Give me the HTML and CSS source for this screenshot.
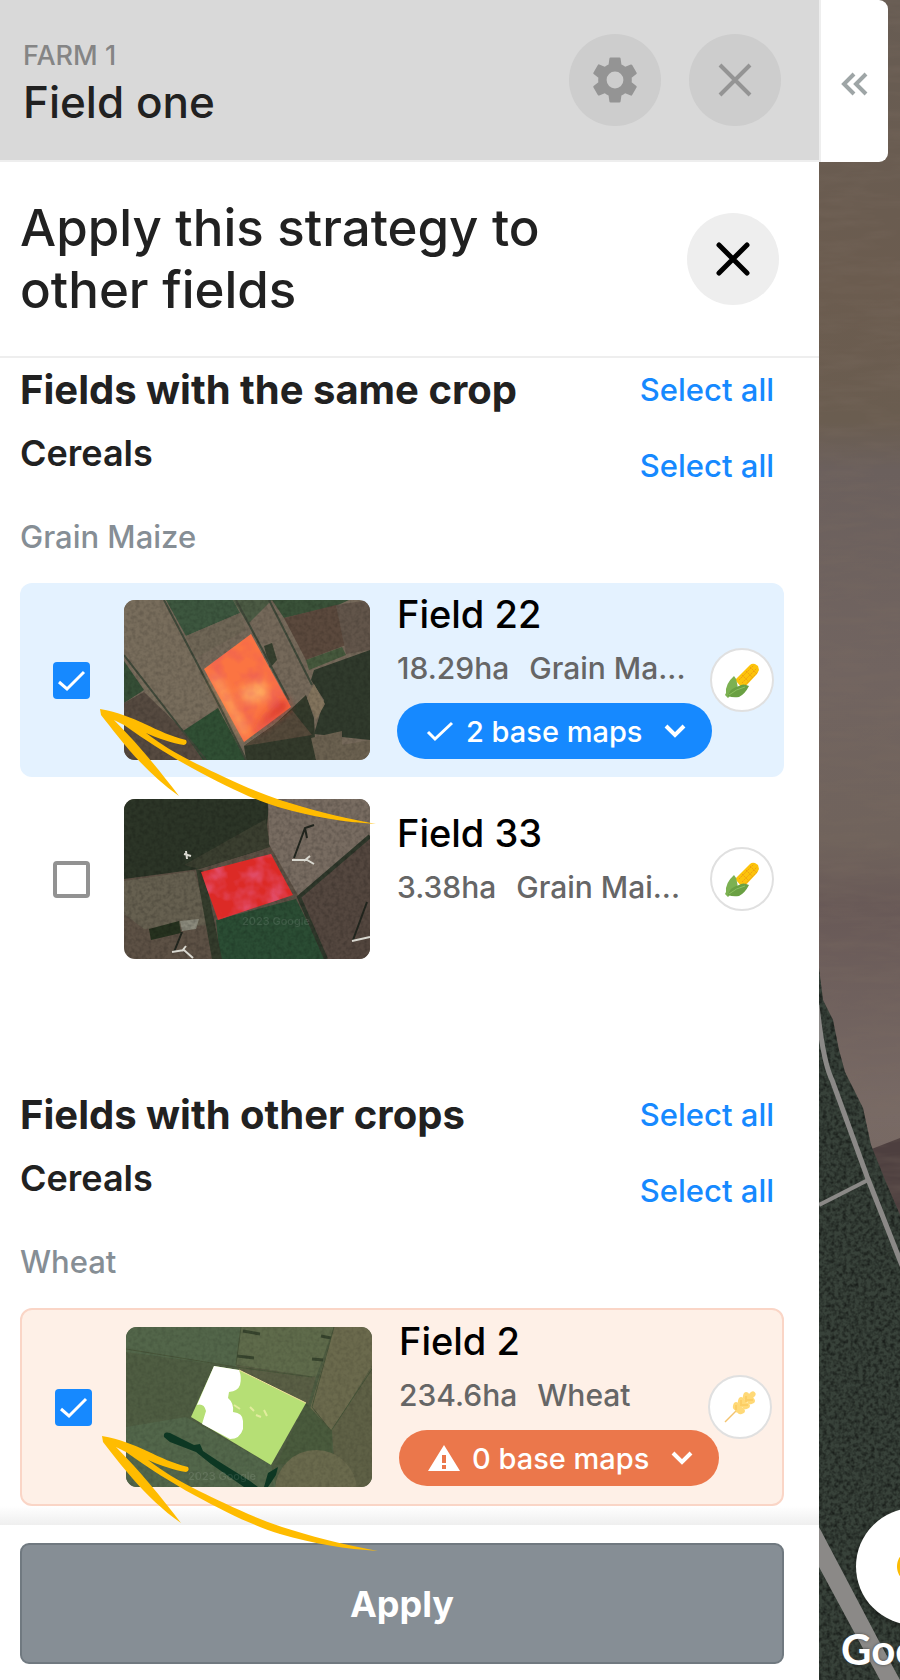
FILE: index.html
```html
<!DOCTYPE html>
<html lang="en">
<head>
  <meta charset="UTF-8" />
  <meta name="viewport" content="width=device-width, initial-scale=1.0"/>
  <title>Apply strategy to other fields</title>
  <link rel="stylesheet" href="styles.css">
</head>
<body>

  <!-- shared icons and filters -->
  <svg class="defs" width="0" height="0" aria-hidden="true">
    <defs>
      <filter id="grain" x="0" y="0" width="100%" height="100%">
        <feTurbulence type="fractalNoise" baseFrequency="0.25" numOctaves="3" seed="4"/>
        <feColorMatrix values="0 0 0 0 0  0 0 0 0 0  0 0 0 0 0  1.6 0 0 0 -0.6"/>
      </filter>
      <filter id="streaks" x="0" y="0" width="100%" height="100%">
        <feTurbulence type="fractalNoise" baseFrequency="0.02 0.12" numOctaves="3" seed="9"/>
        <feColorMatrix values="0 0 0 0 0.2  0 0 0 0 0.15  0 0 0 0 0.12  1.4 0 0 0 -0.5"/>
      </filter>
      <filter id="heat" x="0" y="0" width="100%" height="100%">
        <feTurbulence type="fractalNoise" baseFrequency="0.05" numOctaves="3" seed="12"/>
        <feColorMatrix values="0 0 0 0 0.75  0 0 0 0 0.07  0 0 0 0 0.13  3 0 0 0 -1.2"/>
        <feComposite in2="SourceGraphic" operator="in"/>
      </filter>
      <filter id="soft" x="-50%" y="-50%" width="200%" height="200%">
        <feGaussianBlur stdDeviation="4"/>
      </filter>
      <symbol id="close" viewBox="0 0 56 56">
        <path d="M13 13 43 43M43 13 13 43" fill="none" stroke="currentColor" stroke-width="4"/>
      </symbol>
      <symbol id="tick" viewBox="0 0 28 22">
        <path d="M2 12 9 19 26 3" fill="none" stroke="currentColor" stroke-width="3"/>
      </symbol>
      <symbol id="chevron" viewBox="0 0 22 14">
        <path d="M2 2 11 11 20 2" fill="none" stroke="currentColor" stroke-width="4"/>
      </symbol>
      <symbol id="corn" viewBox="0 0 34 35">
        <path d="M10 17 25 2Q27 0 30 1L33 3 34 7 32 11 18 26Z" fill="#fcc30b"/>
        <path d="M14 17 29 2M17 20 32 5M20 22 33 9M17 12l7 7M21 8l7 7M25 4l6 6" fill="none" stroke="#f0a012" stroke-width="1" stroke-dasharray="2 1"/>
        <path d="M9 13Q0 21 1 30L0 32 3 35 5 33Q15 27 12 20 12 16 9 13Z" fill="#7cb152"/>
        <path d="M3 33Q5 25 14 23 18 20 24 23 20 31 14 34 8 35 3 33Z" fill="#6aa043"/>
        <path d="M4 32Q11 26 20 24" fill="none" stroke="#8bc060" stroke-width="1"/>
      </symbol>
      <symbol id="wheat" viewBox="0 0 32 32">
        <path d="M1 31 14 18" stroke="#f3c36f" stroke-width="1.5"/>
        <g fill="#ffd977">
          <ellipse cx="28" cy="4" rx="4" ry="3" transform="rotate(-45 28 4)"/>
          <ellipse cx="22" cy="5" rx="4" ry="3" transform="rotate(-75 22 5)"/>
          <ellipse cx="27" cy="10" rx="4" ry="3" transform="rotate(-15 27 10)"/>
          <ellipse cx="17" cy="10" rx="4" ry="3" transform="rotate(-75 17 10)"/>
          <ellipse cx="22" cy="15" rx="4" ry="3" transform="rotate(-15 22 15)"/>
          <ellipse cx="12" cy="15" rx="4" ry="3" transform="rotate(-75 12 15)"/>
          <ellipse cx="17" cy="20" rx="4" ry="3" transform="rotate(-15 17 20)"/>
          <path d="M10 18 26 3 28 6 13 22Z"/>
        </g>
        <path d="M17 9v6M22 5v6M18 14h6M23 9h6M12 14v5" fill="none" stroke="#f9c252" stroke-width="1"/>
      </symbol>
      <symbol id="arrow" viewBox="0 0 277 118">
        <path d="M0 1 1 7C17 27 42 62 79 88 60 63 38 36 14 12L24 17C48 34 70 48 92 60 125 78 152 91 178 99 212 109 244 114 276 116 238 109 208 101 180 92 150 82 120 67 97 56 77 46 60 36 46 25 60 31 72 35 84 37Q88 36 86 32C70 28 60 23 45 16 32 10 18 4 0 1Z" fill="#ffbc00"/>
      </symbol>
    </defs>
  </svg>

  <main class="panel">
    <header class="panel-header">
      <div class="header-text">
        <p class="farm">FARM 1</p>
        <h1>Field one</h1>
      </div>
      <div class="header-actions">
        <button class="round" aria-label="Settings">
          <svg width="56" height="56" viewBox="0 0 24 24"><path fill="currentColor" d="M19.14 12.94c.04-.3.06-.61.06-.94 0-.32-.02-.64-.07-.94l2.03-1.58c.18-.14.23-.41.12-.61l-1.92-3.32c-.12-.22-.37-.29-.59-.22l-2.39.96c-.5-.38-1.03-.7-1.62-.94L14.4 2.81c-.04-.24-.24-.41-.48-.41h-3.84c-.24 0-.43.17-.47.41l-.36 2.54c-.59.24-1.13.57-1.62.94l-2.39-.96c-.22-.08-.47 0-.59.22L2.74 8.87c-.12.21-.08.47.12.61l2.03 1.58c-.05.3-.09.63-.09.94s.02.64.07.94l-2.03 1.58c-.18.14-.23.41-.12.61l1.92 3.32c.12.22.37.29.59.22l2.39-.96c.5.38 1.03.7 1.62.94l.36 2.54c.05.24.24.41.48.41h3.84c.24 0 .44-.17.47-.41l.36-2.54c.59-.24 1.13-.56 1.62-.94l2.39.96c.22.08.47 0 .59-.22l1.92-3.32c.12-.22.07-.47-.12-.61l-2.01-1.58zM12 15.6A3.6 3.6 0 1 1 12 8.4a3.6 3.6 0 0 1 0 7.2z"/></svg>
        </button>
        <button class="round" aria-label="Close field">
          <svg width="56" height="56"><use href="#close"/></svg>
        </button>
      </div>
    </header>

    <div class="dialog-title">
      <h2>Apply this strategy to other fields</h2>
      <button class="round light" aria-label="Close dialog">
        <svg width="56" height="56" viewBox="0 0 56 56"><path d="M14 14 42 42M42 14 14 42" stroke="currentColor" stroke-width="5" stroke-linecap="round"/></svg>
      </button>
    </div>

    <div class="field-list">
      <section class="same-crop">
        <div class="row">
          <h3>Fields with the same crop</h3>
          <a href="#">Select all</a>
        </div>
        <div class="row group">
          <h4>Cereals</h4>
          <a href="#">Select all</a>
        </div>
        <p class="crop-name">Grain Maize</p>

        <div class="field-card selected">
          <input type="checkbox" aria-label="Field 22" checked>
          <svg class="thumb" viewBox="0 0 246 160" aria-hidden="true">
            <rect width="246" height="160" fill="#75695a"/>
            <path d="M0 0H42L94 108 57 128 20 90 0 55Z" fill="#786d5c"/>
            <path d="M42 0H109L116 13 62 36Z" fill="#3d573f"/>
            <path d="M62 36 116 13 122 30 72 58Z" fill="#6f6656"/>
            <path d="M109 0H148L124 24Z" fill="#4c5b44"/>
            <path d="M0 61 20 90 0 103Z" fill="#354e36"/>
            <path d="M0 103 20 92 57 128 80 160H0Z" fill="#564a40"/>
            <path d="M59 131 94 108 122 160H79Z" fill="#304f34"/>
            <path d="M148 0H225L212 6 160 18Z" fill="#3a5239"/>
            <path d="M160 18 212 5 222 45 182 60Z" fill="#5b493d"/>
            <path d="M212 5 246 0V50L222 54Z" fill="#62554a"/>
            <path d="M182 60 218 47 222 55 185 70Z" fill="#46593d"/>
            <path d="M246 50 190 70 187 80 200 100 190 134 246 140Z" fill="#303a2c"/>
            <path d="M120 146 150 125 182 95 190 118 192 160H122Z" fill="#333a2b"/>
            <path d="M120 146 150 125 168 110 188 135Z" fill="#54493a"/>
            <path d="M187 138 218 131V145L246 140V160H192Z" fill="#6b6150"/>
            <path d="M190 84 201 104 192 120 183 98Z" fill="#83745d"/>
            <path d="M140 46 148 43 153 60 146 68Z" fill="#37402f"/>
            <path d="M40 0 96 107M0 55 58 130 82 160M96 107 122 160M112 0 165 100M145 0 188 85" fill="none" stroke="#40493a" stroke-width="2"/>
            <rect width="246" height="160" filter="url(#grain)" opacity=".2"/>
            <path d="M127 34 80 69 120 142 167 107Z" fill="#fb7442"/>
            <path d="M86 75 94 76 124 130 120 138Z" fill="#ffa75e" filter="url(#soft)"/>
            <path d="M115 90 140 80 145 98 122 104Z" fill="#ffab60" filter="url(#soft)"/>
            <path d="M160 98 165 107 130 132 142 117Z" fill="#d42a20" filter="url(#soft)"/>
            <path d="M127 34 80 69 120 142 167 107Z" filter="url(#heat)" opacity=".35"/>
          </svg>
          <div class="field-info">
            <h5>Field 22</h5>
            <p><span>18.29ha</span><span>Grain Ma...</span></p>
            <button class="maps">
              <svg width="28" height="22"><use href="#tick"/></svg>
              2 base maps
              <svg class="caret" width="22" height="14"><use href="#chevron"/></svg>
            </button>
          </div>
          <span class="crop-icon"><svg width="34" height="35"><use href="#corn"/></svg></span>
          <svg class="arrow" width="277" height="118" aria-hidden="true"><use href="#arrow"/></svg>
        </div>

        <div class="field-card no-maps">
          <input type="checkbox" aria-label="Field 33">
          <svg class="thumb" viewBox="0 0 246 160" aria-hidden="true">
            <rect width="246" height="160" fill="#5d5145"/>
            <path d="M0 0H146L140 50 75 70 0 80Z" fill="#2c3527"/>
            <path d="M60 66 142 20 146 48 75 70Z" fill="#3b3f30"/>
            <path d="M144 0H246V37L175 98 145 45Z" fill="#786c61"/>
            <path d="M246 37V160H202L175 100Z" fill="#54473f"/>
            <path d="M0 82 70 72 86 126 20 130 0 115Z" fill="#666050"/>
            <path d="M92 121 172 100 202 160H96Z" fill="#2b4d34"/>
            <path d="M72 70 80 72 98 160H88Z" fill="#343c2c"/>
            <path d="M25 130 55 122 57 134 27 141Z" fill="#26321f"/>
            <path d="M56 122 75 120 72 130 58 132Z" fill="#8b8a7c"/>
            <path d="M246 37 175 98 202 160" fill="none" stroke="#2f382b" stroke-width="4"/>
            <rect width="246" height="160" filter="url(#grain)" opacity=".25"/>
            <text x="118" y="126" font-family="Inter, sans-serif" font-size="11" fill="#fff" opacity=".1">2023 Google</text>
            <path d="M77 73 147 55 169 96 94 121Z" fill="#dc2a26"/>
            <path d="M77 73 147 55 169 96 94 121Z" filter="url(#heat)"/>
            <path d="M190 26 181 29 170 59M181 29 183 39M243 103 229 141M58 133 50 153" fill="none" stroke="#20241d" stroke-width="2"/>
            <path d="M168 61 183 61 190 65M180 62 186 57M228 142 246 138M48 153 60 151 69 159M58 152 62 147M62 52 63 60M60 55 67 57" fill="none" stroke="#d9d8d0" stroke-width="2"/>
          </svg>
          <div class="field-info">
            <h5>Field 33</h5>
            <p><span>3.38ha</span><span>Grain Mai...</span></p>
          </div>
          <span class="crop-icon"><svg width="34" height="35"><use href="#corn"/></svg></span>
        </div>
      </section>

      <section>
        <div class="row">
          <h3>Fields with other crops</h3>
          <a href="#">Select all</a>
        </div>
        <div class="row group">
          <h4>Cereals</h4>
          <a href="#">Select all</a>
        </div>
        <p class="crop-name">Wheat</p>

        <div class="field-card warning">
          <input type="checkbox" aria-label="Field 2" checked>
          <svg class="thumb" viewBox="0 0 246 160" aria-hidden="true">
            <rect width="246" height="160" fill="#4f5d42"/>
            <path d="M0 0H115L110 40 0 25Z" fill="#53664a"/>
            <path d="M115 0H208L190 50 110 38Z" fill="#5f6b4b"/>
            <path d="M110 38 190 50 182 78 113 43Z" fill="#5a5f45"/>
            <path d="M208 0H246V39L206 104 184 82Z" fill="#6b6a4d"/>
            <path d="M246 39V160H210L206 104Z" fill="#5f6146"/>
            <path d="M0 100 60 90 145 138 150 160H0Z" fill="#53674b"/>
            <path d="M180 76 206 104V130L150 138Z" fill="#4a5b3d"/>
            <circle cx="190" cy="164" r="41" fill="#6a6a4d"/>
            <path d="M0 22 110 40 186 50M115 0 110 38M208 0 186 80 205 104 246 42" fill="none" stroke="#49563a" stroke-width="1"/>
            <path d="M117 4 134 7M195 9 205 11M111 29 128 31M186 32 197 33" stroke="#38452e" stroke-width="3"/>
            <rect width="246" height="160" filter="url(#grain)" opacity=".15"/>
            <path d="M38 110Q37 104 44 106L68 118 74 117 77 124 92 134 124 154 132 160H118L85 137 70 125 44 115ZM138 160 142 146 152 140 150 148 142 160Z" fill="#0d3723"/>
            <text x="62" y="153" font-family="Inter, sans-serif" font-size="11" fill="#fff" opacity=".1">2023 Google</text>
            <path d="M88 39 113 43 180 76 145 138 65 90Z" fill="#b6df75"/>
            <path d="M113 43 180 76" stroke="#f4e49a" stroke-width="1"/>
            <path d="M88 39 113 43Q116 50 114 58 112 64 103 65L102 71Q108 76 107 85 117 86 117 94V102Q114 112 104 112L76 97 80 84Q78 76 71 78Z" fill="#fff"/>
            <path d="M108 78 114 82M124 80l4 4M130 88l5 2M138 83l3 6" stroke="#e2ec9d" stroke-width="2"/>
          </svg>
          <div class="field-info">
            <h5>Field 2</h5>
            <p><span>234.6ha</span><span>Wheat</span></p>
            <button class="maps">
              <svg width="32" height="28" viewBox="0 0 32 28"><path fill="currentColor" fill-rule="evenodd" d="M16 1 32 27H0ZM14 11V19H18V11ZM14 21V25H18V21Z"/></svg>
              0 base maps
              <svg class="caret" width="22" height="14"><use href="#chevron"/></svg>
            </button>
          </div>
          <span class="crop-icon"><svg width="32" height="32"><use href="#wheat"/></svg></span>
          <svg class="arrow" width="277" height="118" aria-hidden="true"><use href="#arrow"/></svg>
        </div>
      </section>
    </div>

    <footer>
      <button class="apply">Apply</button>
    </footer>
  </main>

  <aside class="map">
    <svg class="satellite" viewBox="0 0 81 1680" preserveAspectRatio="xMinYMin slice" aria-hidden="true">
      <defs>
        <linearGradient id="soil" x1="0" y1="0" x2="0" y2="1">
          <stop offset="0" stop-color="#675c53"/>
          <stop offset=".17" stop-color="#6b5c4f"/>
          <stop offset=".25" stop-color="#6a5d50"/>
          <stop offset=".28" stop-color="#6b605d"/>
          <stop offset=".4" stop-color="#716460"/>
          <stop offset=".5" stop-color="#70635c"/>
          <stop offset=".54" stop-color="#685957"/>
          <stop offset=".66" stop-color="#786a65"/>
          <stop offset="1" stop-color="#6b5d5a"/>
        </linearGradient>
        <clipPath id="forest">
          <path d="M0 968 4 1000 14 1020 20 1050 26 1072 44 1108 52 1145 66 1180 81 1215V1680H0Z"/>
        </clipPath>
      </defs>
      <rect width="81" height="1680" fill="url(#soil)"/>
      <path d="M50 1150 81 1138V1230L62 1190Z" fill="#4d3f3f"/>
      <rect width="81" height="1680" filter="url(#streaks)" opacity=".4"/>
      <g clip-path="url(#forest)">
        <rect y="960" width="81" height="720" fill="#38423a"/>
        <rect y="960" width="81" height="720" filter="url(#grain)" opacity=".7"/>
      </g>
      <path d="M-2 1005Q4 1062 13 1080L49 1179 84 1268" fill="none" stroke="#8b8987" stroke-width="5"/>
      <path d="M0 1205 49 1180" stroke="#8b8987" stroke-width="4"/>
      <path d="M0 1527 61 1643 81 1680H61L0 1567Z" fill="#8b8987"/>
    </svg>
    <button class="collapse" aria-label="Collapse panel">
      <svg width="28" height="24" viewBox="0 0 28 24"><path d="M13 2 3 12 13 22M25 2 15 12 25 22" fill="none" stroke="currentColor" stroke-width="4"/></svg>
    </button>
    <button class="locate" aria-label="Map marker"></button>
    <span class="google">Google</span>
  </aside>

</body>
</html>
```
FILE: styles.css
```css
* {
  box-sizing: border-box;
}
body {
  margin: 0;
  display: flex;
  min-height: 100vh;
  font-family: Inter, 'Open Sans', sans-serif;
  font-weight: 500;
  color: #212121;
  background: #fff;
}
h1, h2, h3, h4, h5, p {
  margin: 0;
  font-weight: 500;
}
button {
  font-family: inherit;
  border: none;
  padding: 0;
}
svg {
  display: block;
  flex-shrink: 0;
}
.defs {
  position: absolute;
}
.panel {
  width: 91%;
  display: flex;
  flex-direction: column;
}

/* header */
.panel-header {
  display: flex;
  justify-content: space-between;
  align-items: center;
  height: 162px;
  padding: 0 38px 0 23px;
  background: #d9d9d9;
  border-bottom: 2px solid #eee;
}
.header-text {
  padding-top: 8px;
}
.farm {
  font-size: 27px;
  line-height: 36px;
  color: #858585;
}
h1 {
  font-size: 44px;
  line-height: 56px;
}
.header-actions {
  display: flex;
  gap: 28px;
}
.round {
  display: flex;
  justify-content: center;
  align-items: center;
  flex-shrink: 0;
  width: 92px;
  height: 92px;
  border-radius: 50%;
  background: #cdcdcd;
  color: #949494;
}
.round.light {
  background: #eee;
  color: #000;
}

.dialog-title {
  display: flex;
  justify-content: space-between;
  align-items: center;
  padding: 35px 40px 35px 20px;
  border-bottom: 2px solid #eee;
}
h2 {
  max-width: 560px;
  font-size: 51px;
  line-height: 62px;
}

/* list */
.field-list {
  flex: 1;
  padding: 0 35px 19px 20px;
  background: linear-gradient(#fff, #efefef) bottom / 100% 19px no-repeat;
}
.same-crop {
  padding-bottom: 107px;
}
.row {
  display: flex;
  justify-content: space-between;
  align-items: center;
  height: 62px;
  padding-right: 10px;
}
.row.group {
  height: 90px;
}
.row a {
  font-size: 31px;
  color: #1689ff;
  text-decoration: none;
}
h3 {
  font-size: 40px;
  font-weight: 700;
}
h4 {
  align-self: flex-start;
  font-size: 36px;
  line-height: 66px;
  font-weight: 600;
}
.crop-name {
  margin-bottom: 20px;
  font-size: 31px;
  line-height: 53px;
  color: #868e95;
}
.field-card {
  position: relative;
  display: flex;
  align-items: center;
  min-height: 194px;
  padding: 9px 10px 9px 33px;
  border-radius: 12px;
}
.field-card + .field-card {
  margin-top: 5px;
}
.selected {
  background: #e4f2ff;
}
.warning {
  background: #fef0e7;
  border: 2px solid #fad5c6;
}
.field-card input {
  appearance: none;
  flex-shrink: 0;
  width: 37px;
  height: 37px;
  margin: 0 34px 0 0;
  border: 4px solid #929292;
  border-radius: 4px;
  background: #fff;
}
.field-card input:checked {
  border: none;
  background: #1689ff url("data:image/svg+xml,%3Csvg xmlns='http://www.w3.org/2000/svg' viewBox='0 0 37 37'%3E%3Cpath d='M6 20 14 27 31 10' fill='none' stroke='white' stroke-width='3'/%3E%3C/svg%3E");
}
.thumb {
  width: 246px;
  height: 160px;
  border-radius: 11px;
}
.field-info {
  flex: 1;
  min-width: 0;
  margin-left: 27px;
  padding-bottom: 9px;
  white-space: nowrap;
}
.no-maps .field-info {
  padding-bottom: 32px;
}
h5 {
  margin-bottom: 4px;
  font-size: 38px;
  line-height: 44px;
  color: #000;
}
.field-info p {
  display: flex;
  gap: 20px;
  font-size: 30px;
  line-height: 56px;
  color: #666;
}
.maps {
  display: flex;
  align-items: center;
  gap: 12px;
  height: 56px;
  margin-top: 7px;
  padding: 0 26px 0 29px;
  border-radius: 28px;
  background: #1689ff;
  color: #fff;
  font-size: 29px;
  font-weight: 500;
}
.warning .maps {
  background: #eb774b;
}
.caret {
  margin-left: 10px;
}
.crop-icon {
  display: flex;
  justify-content: center;
  align-items: center;
  flex-shrink: 0;
  width: 64px;
  height: 64px;
  border: 2px solid #e0e0e0;
  border-radius: 50%;
  background: #fff;
}
.arrow {
  position: absolute;
  z-index: 1;
  top: 125px;
  left: 80px;
  pointer-events: none;
}

footer {
  padding: 18px 35px 16px 20px;
}
.apply {
  width: 100%;
  height: 121px;
  border: 2px solid #707980;
  border-radius: 9px;
  background: #868e95;
  color: #fff;
  font-size: 36px;
  font-weight: 700;
}

/* map */
.map {
  position: relative;
  flex: 1;
  overflow: hidden;
  background: #6b5d54;
}
.satellite {
  position: absolute;
  width: 100%;
  height: 100%;
}
.collapse {
  position: absolute;
  top: 0;
  left: 0;
  display: flex;
  justify-content: center;
  align-items: center;
  width: 69px;
  height: 162px;
  padding-top: 6px;
  border-left: 2px solid #eee;
  border-radius: 0 9px 9px 0;
  background: #fff;
  color: #9ea5a6;
}
.locate {
  position: absolute;
  left: 37px;
  bottom: 55px;
  width: 117px;
  height: 117px;
  border-radius: 50%;
  background: radial-gradient(circle, #fbbc04 17px, #fff 18px);
  box-shadow: 0 2px 6px rgba(0,0,0,0.4);
}
.google {
  position: absolute;
  left: 22px;
  bottom: 4px;
  font-family: Lato, sans-serif;
  font-size: 42px;
  font-weight: 700;
  line-height: 54px;
  color: #fff;
  text-shadow: 0 0 3px #444;
}
```
